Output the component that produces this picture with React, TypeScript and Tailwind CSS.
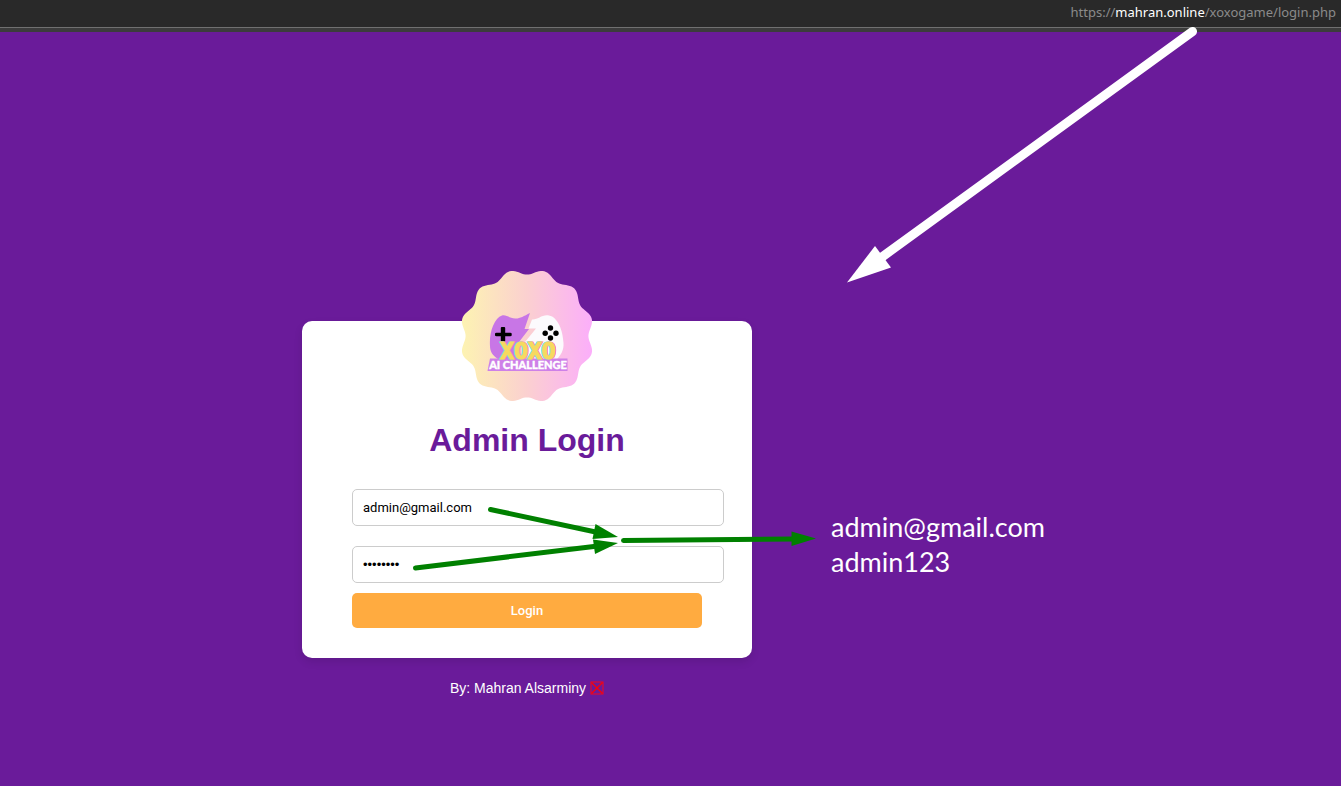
const badgePath = (() => {
  const points: string[] = [];
  for (let i = 0; i < 240; i++) {
    const t = (i / 240) * Math.PI * 2;
    const r = 64.2 - 2.8 * Math.cos(12 * t);
    points.push(`${(65 + r * Math.sin(t)).toFixed(2)} ${(65 - r * Math.cos(t)).toFixed(2)}`);
  }
  return `M${points.join("L")}Z`;
})();

function Logo() {
  return (
    <svg
      className="h-[130px] w-[130px] overflow-visible"
      viewBox="0 0 130 130"
      role="img"
      aria-label="XOXO AI Challenge"
    >
      <defs>
        <linearGradient id="badge" x1="0" x2="1" y1="0" y2="0">
          <stop offset="0" stopColor="#fdf3b2" />
          <stop offset="0.5" stopColor="#fbd0d0" />
          <stop offset="1" stopColor="#fbaefa" />
        </linearGradient>
      </defs>
      <path d={badgePath} fill="url(#badge)" />
      <path
        d="M28 75C27 62 32 47 40 44.500C45 43.500 48 48 54 47.500C58 47.500 62 45 68 42L62.500 58H67L57 71L57 88H36C30 84 28 80 28 75Z"
        fill="#c876e6"
      />
      <path
        d="M70 48.500C76 49 80 43 87 44.500C96 46 101 60 101.500 72C102 79 99 84 95 88H66L63 71L74 57.500H66.500Z"
        fill="#fcfafd"
      />
      <path d="M38.800 57q0-1 1-1h2.400q1 0 1 1v4.800h5q1.500 0 1.500 1v1.500q0 1-1.500 1h-5V70q0 1-1 1h-2.400q-1 0-1-1v-4.700h-4.300q-1.500 0-1.500-1v-1.500q0-1 1.500-1h4.300Z" fill="#000" />
      <g fill="#000">
        <circle cx="88.500" cy="57" r="2.700" />
        <circle cx="83.200" cy="62.200" r="2.700" />
        <circle cx="94" cy="62.200" r="2.700" />
        <circle cx="88.500" cy="67" r="2.700" />
      </g>
      <path d="M28 87.500H105.500V100H25.500Z" fill="#ce80e8" />
      <text
        x="66"
        y="88"
        className="[filter:drop-shadow(-1px_0_0_#6de5dc)_drop-shadow(1px_0_0_#f481bd)]"
        fontFamily="'DejaVu Sans Mono', monospace"
        fontWeight="700"
        fontSize="23"
        textAnchor="middle"
        strokeWidth="1.200"
        fill="#f7d960"
        stroke="#f7d960"
      >
        XOXO
      </text>
      <text
        x="66"
        y="98"
        fill="#fff"
        stroke="#fff"
        strokeWidth="0.400"
        fontFamily="Lato, sans-serif"
        fontWeight="900"
        fontSize="11"
        textAnchor="middle"
      >
        AI CHALLENGE
      </text>
    </svg>
  );
}

function Arrows() {
  return (
    <svg className="pointer-events-none absolute inset-0 h-full w-full" aria-hidden="true">
      <path d="M1192.500 31.500L880 258.500" strokeLinecap="round" strokeWidth="9" stroke="#fff" />
      <path d="M847 282.500L875 246L891 267.500Z" fill="#fff" />
      <g strokeLinecap="round" strokeWidth="5" stroke="#008000">
        <path d="M490.500 509.500L598 532.500" />
        <path d="M415.500 568L598 546" />
        <path d="M623.500 540.500L794 539" />
      </g>
      <g fill="#008000">
        <path d="M618 537L595.500 524L592.500 539Z" />
        <path d="M618 543L593 539.500L595 554Z" />
        <path d="M816 538.500L791.500 531.500V546Z" />
      </g>
    </svg>
  );
}

export default function App() {
  return (
    <div className="relative flex min-h-screen flex-col bg-[#6a1b9a] font-['Liberation_Sans',sans-serif]">
      <header className="flex h-8 flex-col bg-[#3c3c3c]">
        <div className="flex h-7 items-center justify-end border-b border-[#707070] bg-[#292929] px-[5px]">
          <a
            href="https://mahran.online/xoxogame/login.php"
            className="pb-1 font-['Noto_Sans',sans-serif] text-[13px] leading-5 text-[#8b8b8b]"
          >
            https://<span className="text-white">mahran.online</span>/xoxogame/login.php
          </a>
        </div>
      </header>

      <main className="flex items-start pt-[289px] pl-[302px]">
        <div className="flex w-[450px] flex-col items-center">
          <form
            className="flex w-full flex-col items-center rounded-[10px] bg-white px-[50px] pb-[30px] shadow-[0_4px_8px_rgba(0,0,0,0.1)]"
            onSubmit={(event) => event.preventDefault()}
          >
            <div className="-mt-[50px]">
              <Logo />
            </div>
            <h1 className="mt-5 text-[32px] leading-[38px] font-bold text-[#6a1b9a]">Admin Login</h1>
            <div className="mt-[30px] w-[372px] self-start">
              <input
                type="email"
                aria-label="Email"
                defaultValue="admin@gmail.com"
                className="block h-[37px] w-full rounded-[5px] border border-[#ccc] bg-white px-[10px] font-[Roboto,sans-serif] text-[13px] text-black"
              />
              <input
                type="password"
                aria-label="Password"
                defaultValue="admin123"
                className="mt-5 block h-[37px] w-full rounded-[5px] border border-[#ccc] bg-white px-[10px] text-[13px] text-black"
              />
            </div>
            <button
              type="submit"
              className="mt-[10px] h-[35px] w-full rounded-[5px] bg-[#ffab40] font-[Roboto,sans-serif] text-[13px] font-medium text-white"
            >
              Login
            </button>
          </form>
          <p className="mt-5 flex items-center gap-1 text-[14px] leading-5 text-white">
            By: Mahran Alsarminy
            <svg className="size-[14px]" viewBox="0 0 14 14" fill="none" aria-hidden="true">
              <rect x="1" y="1" width="12" height="12" stroke="#e8082a" strokeWidth="1.100" />
              <line x1="1.500" y1="1.500" x2="12.500" y2="12.500" stroke="#f00" strokeWidth="1.300" />
              <line x1="12.500" y1="1.500" x2="1.500" y2="12.500" stroke="#f00" strokeWidth="1.300" />
            </svg>
          </p>
        </div>
        <p className="mt-[188px] ml-[79px] font-[Lato,sans-serif] text-[27px] leading-[35px] text-white">
          admin@gmail.com
          <br />
          admin123
        </p>
      </main>
      <Arrows />
    </div>
  );
}
